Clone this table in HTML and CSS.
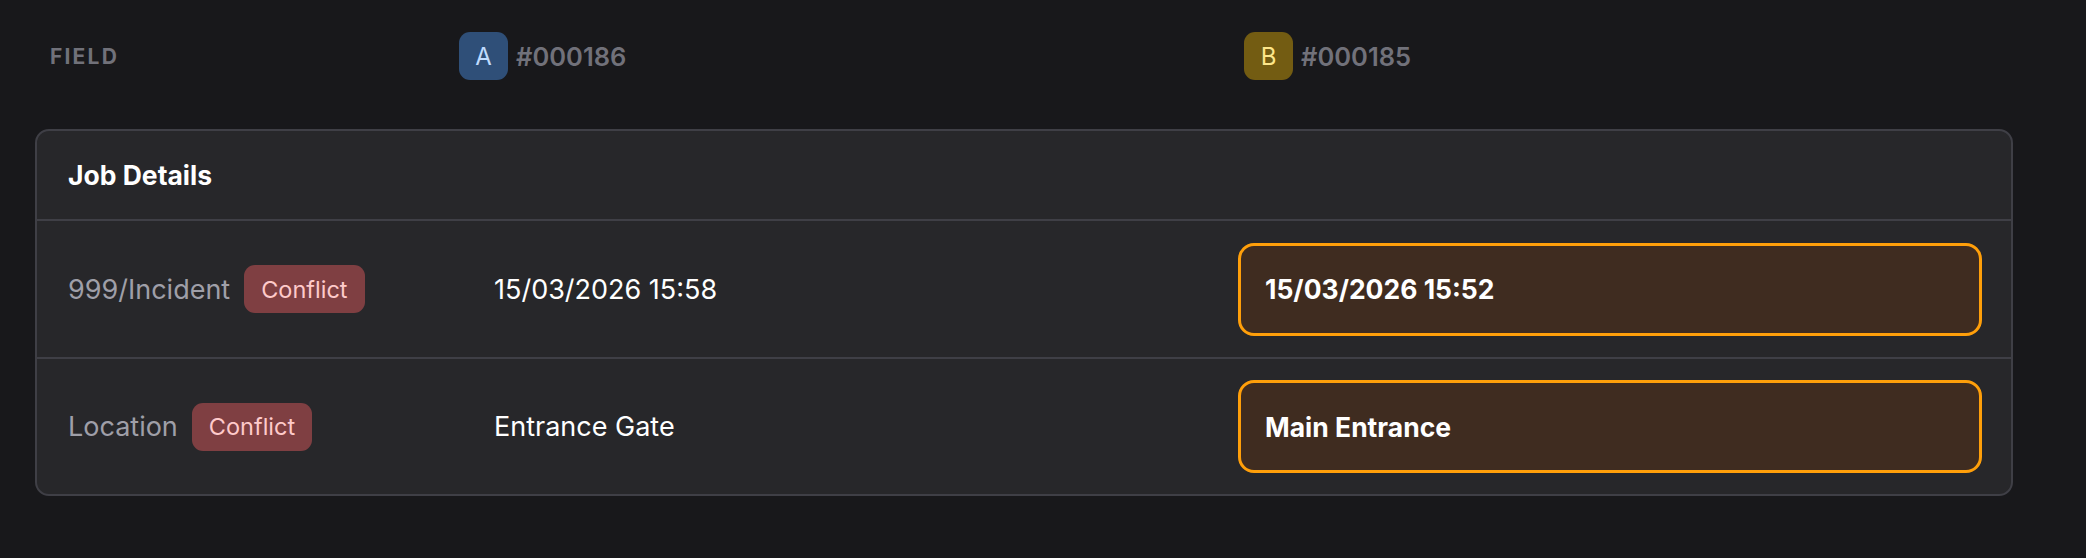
FILE: index.html
```html
<!DOCTYPE html>
<html>
<head>
<meta charset="utf-8">
<link rel="stylesheet" href="styles.css">
</head>
<body>
<div class="page">
  <div class="head">
    <div class="head-field">FIELD</div>
    <div class="head-rec"><span class="tag tag-a">A</span><span class="rec-id">#000186</span></div>
    <div class="head-rec"><span class="tag tag-b">B</span><span class="rec-id">#000185</span></div>
  </div>
  <div class="card">
    <div class="card-title">Job Details</div>
    <div class="row">
      <div class="label"><span class="label-text">999/Incident</span><span class="conflict">Conflict</span></div>
      <div class="val">15/03/2026 15:58</div>
      <div class="val-cell"><div class="pick">15/03/2026 15:52</div></div>
    </div>
    <div class="row">
      <div class="label"><span class="label-text">Location</span><span class="conflict">Conflict</span></div>
      <div class="val">Entrance Gate</div>
      <div class="val-cell"><div class="pick">Main Entrance</div></div>
    </div>
  </div>
</div>
</body>
</html>
```
FILE: styles.css
```css
* { box-sizing: border-box; }
html, body { margin: 0; padding: 0; }
body {
  background: #18181b;
  font-family: Inter, "Noto Sans", sans-serif;
  color: #fafafa;
  width: 2086px;
  height: 558px;
  overflow: hidden;
}
.page {
  padding: 32px 73px 0 35px;
}
.head {
  display: grid;
  grid-template-columns: 409px 785px 1fr;
  align-items: center;
  padding-left: 15px;
  height: 48px;
}
.head-field {
  font-size: 21px;
  font-weight: 700;
  letter-spacing: 2.2px;
  color: #71717a;
}
.head-rec {
  display: flex;
  align-items: center;
  gap: 8px;
}
.tag {
  width: 49px;
  height: 48px;
  border-radius: 11px;
  display: flex;
  align-items: center;
  justify-content: center;
  font-size: 24px;
}
.tag-a { background: #2f4f78; color: #bfdbfe; }
.tag-b { background: #735c12; color: #fde68a; }
.rec-id {
  font-size: 25.5px;
  font-weight: 600;
  color: #71717a;
}
.card {
  margin-top: 49px;
  background: #27272a;
  border: 2px solid #3f3f46;
  border-radius: 14px;
  overflow: hidden;
}
.card-title {
  height: 90px;
  padding-left: 31px;
  display: flex;
  align-items: center;
  font-size: 26.5px;
  font-weight: 700;
  color: #ffffff;
  border-bottom: 2px solid #3f3f46;
}
.row {
  display: grid;
  grid-template-columns: 426px 1fr 1fr;
  align-items: center;
  padding: 0 29px 0 31px;
  height: 138px;
  border-bottom: 2px solid #3f3f46;
}
.row:last-child { border-bottom: none; height: 135px; }
.label {
  display: flex;
  align-items: center;
  gap: 14px;
}
.label-text {
  font-size: 27px;
  color: #9f9fa8;
}
.conflict {
  background: #7f3f42;
  color: #fecaca;
  font-size: 23.5px;
  height: 48px;
  padding: 0 17px;
  border-radius: 11px;
  display: flex;
  align-items: center;
}
.val {
  font-size: 27px;
  color: #ffffff;
}
.pick {
  height: 93px;
  border: 3px solid #ff9f0a;
  background: #3f2c20;
  border-radius: 16px;
  display: flex;
  align-items: center;
  padding-left: 24px;
  font-size: 26.5px;
  font-weight: 700;
  color: #ffffff;
}
```
